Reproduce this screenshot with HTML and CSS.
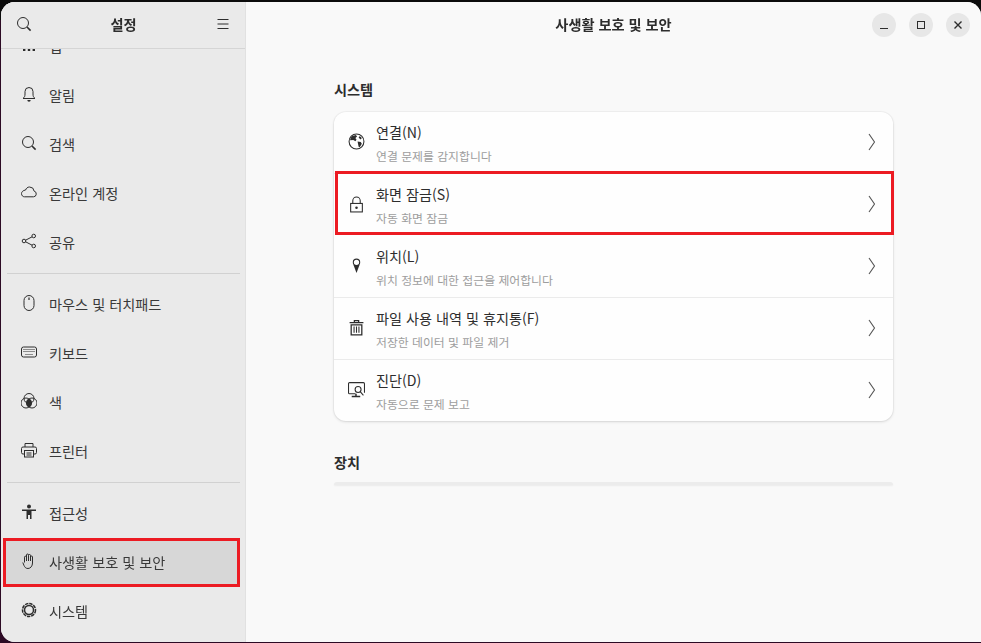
FILE: index.html
```html
<!DOCTYPE html>
<html lang="ko">
<head>
<meta charset="utf-8">
<title>설정</title>
<link rel="stylesheet" href="styles.css">
</head>
<body>
<div class="window">
  <aside class="sidebar">
    <header class="side-head">
      <svg class="ico" viewBox="0 0 16 16"><circle cx="7" cy="7" r="5.500"/><path d="M11 11l3.600 3.600" stroke-width="1.600"/></svg>
      <h1 class="side-title">설정</h1>
      <svg class="ico" viewBox="0 0 16 16"><path d="M2.500 3.500h11M2.500 8h11M2.500 12.500h11"/></svg>
    </header>
    <nav class="side-scroll">
      <div class="side-list">
        <a class="nav-row"><svg class="ico" viewBox="0 0 16 16"><path class="fill" d="M2 2h2.400v2.400H2zM6.800 2h2.400v2.400H6.800zM11.600 2H14v2.400h-2.400zM2 6.800h2.400v2.400H2zM6.800 6.800h2.400v2.400H6.800zM11.600 6.800H14v2.400h-2.400zM2 11.600h2.400V14H2zM6.800 11.600h2.400V14H6.800zM11.600 11.600H14V14h-2.400z"/></svg><span>앱</span></a>
        <a class="nav-row"><svg class="ico" viewBox="0 0 16 16"><path d="M2 12.500h12c-1.500-1.200-2-2.300-2-4.500V5.500a4 4 0 0 0-8 0V8c0 2.200-.5 3.300-2 4.500z"/><path class="fill" d="M6.300 14h3.400a1.700 1.700 0 0 1-3.400 0z"/></svg><span>알림</span></a>
        <a class="nav-row"><svg class="ico" viewBox="0 0 16 16"><circle cx="7" cy="7" r="5.500"/><path d="M11 11l3.600 3.600" stroke-width="1.600"/></svg><span>검색</span></a>
        <a class="nav-row"><svg class="ico" viewBox="0 0 16 16"><path d="M3.500 12.800h9a2.900 2.900 0 0 0 .6-5.700A4.600 4.600 0 0 0 8.600 3C6.600 3 5.100 4.300 4.600 6 2 6.300.5 8 .5 9.600c0 1.800 1.300 3.200 3 3.200z"/></svg><span>온라인 계정</span></a>
        <a class="nav-row"><svg class="ico" viewBox="0 0 16 16"><circle cx="3" cy="8" r="1.800"/><circle cx="12.700" cy="3" r="1.800"/><circle cx="12.700" cy="13" r="1.800"/><path d="M4.600 7.200l6.500-3.400M4.600 8.800l6.500 3.400"/></svg><span>공유</span></a>
        <hr class="side-sep">
        <a class="nav-row"><svg class="ico" viewBox="0 0 16 16"><rect x="3" y=".5" width="10" height="15" rx="5"/><path d="M8 2.500v2.500" stroke-width="1.200"/></svg><span>마우스 및 터치패드</span></a>
        <a class="nav-row"><svg class="ico" viewBox="0 0 16 16"><rect x=".5" y="3" width="15" height="10" rx="2"/><path d="M2.500 5.500h11M2.500 7.500h11M4.500 10.500h7" stroke-dasharray="1 1"/></svg><span>키보드</span></a>
        <a class="nav-row"><svg class="ico" viewBox="0 0 16 16"><circle cx="8" cy="5.500" r="5"/><circle cx="5" cy="10" r="5"/><circle cx="11" cy="10" r="5"/><path class="fill" d="M8 5.500a5 5 0 0 1 3 4.500 5 5 0 0 1-3 4.500 5 5 0 0 1-3-4.500 5 5 0 0 1 3-4.500z"/></svg><span>색</span></a>
        <a class="nav-row"><svg class="ico" viewBox="0 0 16 16"><path d="M4 5V1.500h8V5M3.500 12H2a1.500 1.500 0 0 1-1.500-1.500v-4A1.500 1.500 0 0 1 2 5h12a1.500 1.500 0 0 1 1.500 1.500v4A1.500 1.500 0 0 1 14 12h-1.500"/><rect x="3.500" y="8.500" width="9" height="6.500"/><path d="M5.500 11h5M5.500 13h5"/></svg><span>프린터</span></a>
        <hr class="side-sep">
        <a class="nav-row"><svg class="ico" viewBox="0 0 16 16"><circle class="fill" cx="8" cy="2.500" r="2"/><path class="fill" d="M1 5.500h14v1.500H10.500v8h-1.500v-4H7v4H5.500V7H1z"/></svg><span>접근성</span></a>
        <a class="nav-row selected"><svg class="ico" viewBox="0 0 16 16"><path d="M3.500 9.500V4.200a1 1 0 0 1 2 0V2a1 1 0 0 1 2 0v.500a1 1 0 0 1 2 0v1.500a1 1 0 0 1 2 0v6c0 3-2 5.500-4.500 5.500S3.800 14 3 12.500L1.800 9.500"/><path d="M5.500 3v5M7.500 2.500V8M9.500 3v5"/></svg><span>사생활 보호 및 보안</span></a>
        <a class="nav-row"><svg class="ico" viewBox="0 0 16 16"><circle cx="8" cy="8" r="4.500" stroke-width="1.500"/><circle cx="8" cy="8" r="6.500" stroke-width="1.500" stroke-dasharray="3.400 .9"/></svg><span>시스템</span></a>
      </div>
    </nav>
  </aside>
  <main class="content">
    <header class="main-head">
      <h2 class="main-title">사생활 보호 및 보안</h2>
      <div class="win-btns">
        <button class="win-btn"><svg class="ico" viewBox="0 0 16 16"><path d="M4 11.500h8"/></svg></button>
        <button class="win-btn"><svg class="ico" viewBox="0 0 16 16"><rect x="4.500" y="4.500" width="7" height="7"/></svg></button>
        <button class="win-btn"><svg class="ico" viewBox="0 0 16 16"><path d="M4.500 4.500l7 7M11.500 4.500l-7 7" stroke-width="1.400"/></svg></button>
      </div>
    </header>
    <section class="page">
      <h3 class="group-title">시스템</h3>
      <div class="card">
        <a class="row">
          <svg class="ico" viewBox="0 0 16 16"><circle cx="8" cy="8" r="7"/><path class="fill" d="M4 2.800l3.500-1 1 1.500-1.500 1.500 1 1.500-1 1.500L5 6.500 2 6.800C2 5 3 3.500 4 2.800zM9 8l3 .5 1 1.500-2 3.500-1-.5-.5-2.500zM11 2.800l2 2-1 1.200-2-1.500z"/></svg>
          <div class="row-text"><div class="row-title">연결(N)</div><div class="row-sub">연결 문제를 감지합니다</div></div>
          <svg class="chev" viewBox="0 0 8 18"><path d="M1 1l5.500 8L1 17"/></svg>
        </a>
        <a class="row marked">
          <svg class="ico" viewBox="0 0 16 16"><rect x="2.500" y="7" width="11" height="8"/><path d="M4.500 7V4.500a3.500 3.500 0 0 1 7 0V7"/><circle class="fill" cx="8" cy="11" r="1.200"/></svg>
          <div class="row-text"><div class="row-title">화면 잠금(S)</div><div class="row-sub">자동 화면 잠금</div></div>
          <svg class="chev" viewBox="0 0 8 18"><path d="M1 1l5.500 8L1 17"/></svg>
        </a>
        <a class="row">
          <svg class="ico" viewBox="0 0 16 16"><circle cx="8" cy="5" r="3"/><path class="fill" d="M5.200 7.500h5.600L8 15z"/></svg>
          <div class="row-text"><div class="row-title">위치(L)</div><div class="row-sub">위치 정보에 대한 접근을 제어합니다</div></div>
          <svg class="chev" viewBox="0 0 8 18"><path d="M1 1l5.500 8L1 17"/></svg>
        </a>
        <a class="row">
          <svg class="ico" viewBox="0 0 16 16"><path d="M1.500 3.500h13M6 3.500V1.500h4v2M3 5.500h10V15H3z" stroke-width="1.200"/><path d="M5.700 7v6M8 7v6M10.300 7v6"/></svg>
          <div class="row-text"><div class="row-title">파일 사용 내역 및 휴지통(F)</div><div class="row-sub">저장한 데이터 및 파일 제거</div></div>
          <svg class="chev" viewBox="0 0 8 18"><path d="M1 1l5.500 8L1 17"/></svg>
        </a>
        <a class="row">
          <svg class="ico" viewBox="0 0 16 16"><path d="M7 12H1.500A1 1 0 0 1 .5 11V2.500a1 1 0 0 1 1-1h13a1 1 0 0 1 1 1V11"/><path d="M7.500 12v2M3.500 14.500h8" stroke-width="1.400"/><circle cx="9.500" cy="8" r="2.800"/><path d="M11.500 10l3 3.500"/></svg>
          <div class="row-text"><div class="row-title">진단(D)</div><div class="row-sub">자동으로 문제 보고</div></div>
          <svg class="chev" viewBox="0 0 8 18"><path d="M1 1l5.500 8L1 17"/></svg>
        </a>
      </div>
      <h3 class="group-title second">장치</h3>
      <div class="empty-card"></div>
    </section>
  </main>
</div>
</body>
</html>
```
FILE: styles.css
```css
* { box-sizing: border-box; }
html, body { height: 100%; margin: 0; }
body {
  background: linear-gradient(#0c0c0c 0 20px, #2c0a24 20px);
  padding: 2px 0 1px 1px;
  font-family: "Noto Sans CJK KR", "Noto Sans", sans-serif;
  color: #2e2e2e;
  overflow: hidden;
}
.window {
  display: flex;
  height: 100%;
  border-radius: 14px 14px 0 14px;
  overflow: hidden;
  background: #fafafa;
  opacity: .999;
}
.ico {
  width: 16px; height: 16px; flex: none;
  fill: none; stroke: #2e2e2e; stroke-width: 1;
}
.ico .fill { fill: #2e2e2e; stroke: none; }

.sidebar {
  width: 245px; flex: none;
  background: #ebebeb;
  display: flex; flex-direction: column;
  border-right: 1px solid #e2e2e2;
}
.side-head {
  height: 47px; flex: none;
  display: flex; align-items: center; justify-content: space-between;
  padding: 0 14px 2px 15px;
  border-bottom: 1px solid #d6d6d6;
  background: #ebebeb;
  position: relative; z-index: 1;
}
.side-title { margin: 0; font-size: 14.2px; font-weight: 700; }
.side-scroll { flex: 1; overflow: hidden; }
.side-list {
  display: flex; flex-direction: column; gap: 6px;
  margin-top: -24px;
  padding: 0 8px 0 5px;
}
.nav-row {
  height: 43px; flex: none;
  display: flex; align-items: center; gap: 12px;
  padding: 0 14px 2px 15px;
  font-size: 14.2px; color: #3a3a3a;
}
.nav-row .ico { margin-bottom: 2px; }
.nav-row.selected {
  background: #d8d8d8;
  outline: 3px solid #ed1c24;
}
.side-sep {
  margin: 3px 0 3px 1px; width: 233px;
  border: 0; height: 1px; background: #d2d2d2;
}

.content { flex: 1; display: flex; flex-direction: column; min-width: 0; background: #fafafa; }
.main-head {
  height: 47px; flex: none;
  display: flex; align-items: center; justify-content: center;
  padding-bottom: 3px;
  position: relative;
}
.main-title { margin: 0; font-size: 14.2px; font-weight: 700; }
.win-btns {
  position: absolute; right: 11px; top: 11px;
  display: flex; gap: 13px;
}
.win-btn {
  width: 24px; height: 24px; padding: 0; border: 0;
  border-radius: 50%; background: #e8e8e8;
  display: flex; align-items: center; justify-content: center;
}
.page {
  width: 559px; margin-left: 88px;
  padding-top: 28px;
}
.group-title {
  margin: 0 0 11px; font-size: 14.2px; font-weight: 700; line-height: 24px;
}
.group-title.second { margin-top: 29px; margin-bottom: 8px; }
.card {
  background: #fff;
  border-radius: 12px;
  box-shadow: 0 0 0 1px rgba(0,0,0,.03), 0 1px 3px rgba(0,0,0,.12);
  display: flex; flex-direction: column;
}
.row {
  height: 62px;
  display: flex; align-items: center;
  padding: 0 17px 0 14px;
  border-bottom: 1px solid #ececec;
  position: relative;
}
.row:last-child { border-bottom: 0; height: 61px; }
.row.marked { border-bottom: 0; }
.row.marked::after {
  content: ""; position: absolute;
  left: 1px; right: -1px; top: -3px; bottom: 1px;
  border: 3px solid #ed1c24;
}
.row .ico { width: 17px; height: 17px; margin-bottom: 2px; }
.row-text { flex: 1; align-self: flex-start; margin: 9px 0 0 11px; }
.row-title { font-size: 14.15px; line-height: 22px; color: #2e2e2e; }
.row-sub { font-size: 11.87px; line-height: 18px; margin-top: 4px; color: #9e9e9e; }
.chev { width: 8px; height: 18px; margin-bottom: 2px; fill: none; stroke: #555; stroke-width: 1.1; }
.empty-card {
  height: 3px; border-radius: 3px 3px 0 0;
  background: #ededed;
  box-shadow: 0 1px 2px rgba(0,0,0,.06);
}
```
